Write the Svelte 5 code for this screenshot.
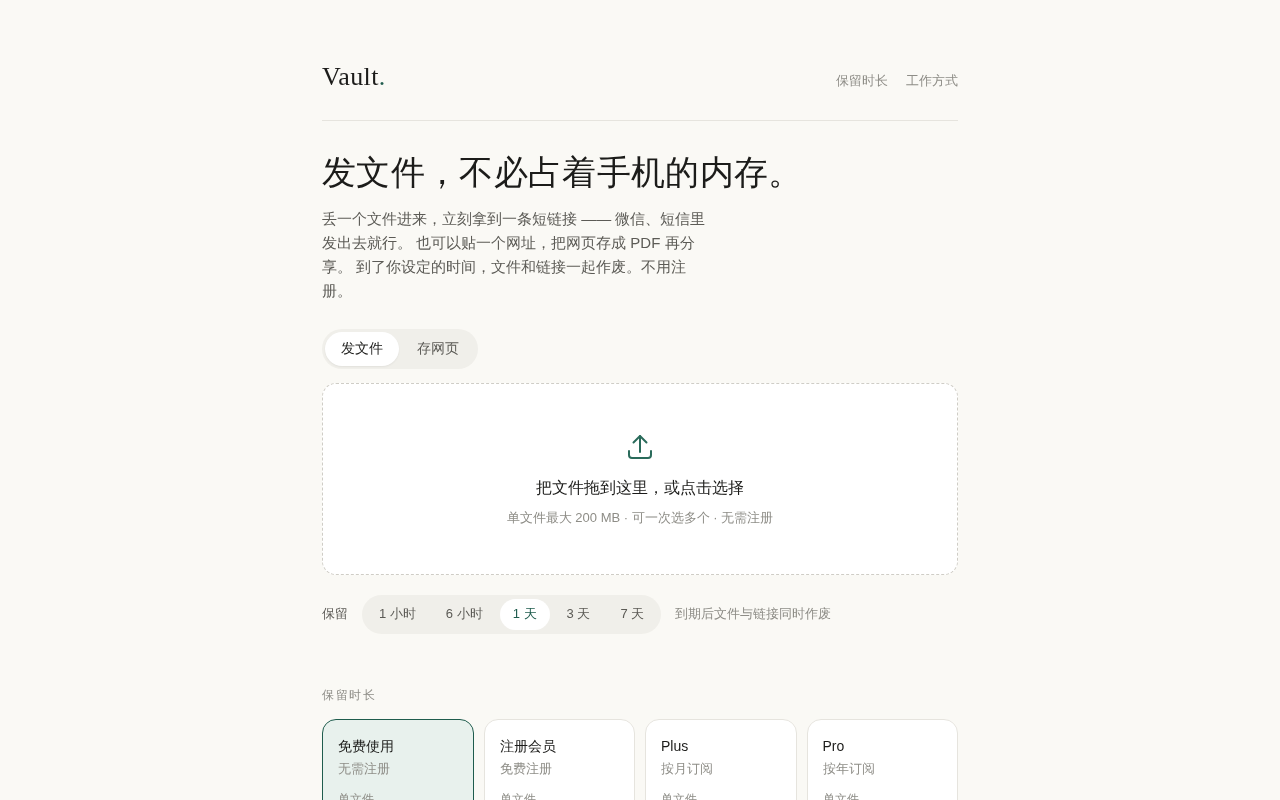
<script>
  let mode = $state('file');
  let retention = $state('1 天');

  const retentionOptions = ['1 小时', '6 小时', '1 天', '3 天', '7 天'];

  const plans = [
    { name: '免费使用', sub: '无需注册', size: '单文件', limit: '200 MB', active: true },
    { name: '注册会员', sub: '免费注册', size: '单文件', limit: '1 GB', active: false },
    { name: 'Plus', sub: '按月订阅', size: '单文件', limit: '5 GB', active: false },
    { name: 'Pro', sub: '按年订阅', size: '单文件', limit: '20 GB', active: false }
  ];
</script>

<div class="page">
  <header class="top">
    <div class="logo">Vault<span class="dot">.</span></div>
    <nav class="links">
      <a href="#plans">保留时长</a>
      <a href="#how">工作方式</a>
    </nav>
  </header>

  <section class="hero">
    <h1>发文件，不必占着手机的内存。</h1>
    <p>丢一个文件进来，立刻拿到一条短链接 —— 微信、短信里发出去就行。 也可以贴一个网址，把网页存成 PDF 再分享。 到了你设定的时间，文件和链接一起作废。不用注册。</p>
  </section>

  <div class="tabs">
    <button class:on={mode === 'file'} onclick={() => (mode = 'file')}>发文件</button>
    <button class:on={mode === 'page'} onclick={() => (mode = 'page')}>存网页</button>
  </div>

  <div class="drop">
    <svg width="28" height="28" viewBox="0 0 28 28" fill="none" stroke="#2a6b5b" stroke-width="2" stroke-linecap="round" stroke-linejoin="round">
      <path d="M14 19V3" />
      <path d="M7.5 9.5L14 3l6.5 6.5" />
      <path d="M3 18v4a3 3 0 0 0 3 3h16a3 3 0 0 0 3-3v-4" />
    </svg>
    <div class="drop-title">把文件拖到这里，或点击选择</div>
    <div class="drop-hint">单文件最大 200 MB · 可一次选多个 · 无需注册</div>
  </div>

  <div class="retain">
    <span class="retain-label">保留</span>
    <div class="pills">
      {#each retentionOptions as opt}
        <button class:on={retention === opt} onclick={() => (retention = opt)}>{opt}</button>
      {/each}
    </div>
    <span class="retain-note">到期后文件与链接同时作废</span>
  </div>

  <section class="plans" id="plans">
    <h2>保留时长</h2>
    <div class="plan-grid">
      {#each plans as plan}
        <div class="plan" class:active={plan.active}>
          <div class="plan-name">{plan.name}</div>
          <div class="plan-sub">{plan.sub}</div>
          <div class="plan-row">{plan.size}</div>
          <div class="plan-limit">{plan.limit}</div>
        </div>
      {/each}
    </div>
  </section>
</div>

<style>
  :global(body) {
    background: #faf9f5;
    color: #1c1c1a;
    font-family: "Liberation Sans", sans-serif;
  }

  .page {
    width: 636px;
    margin: 0 auto;
    padding: 60px 0 48px;
    will-change: transform;
  }

  .top {
    display: flex;
    justify-content: space-between;
    align-items: center;
    height: 60px;
    border-bottom: 1px solid #e6e4de;
  }

  .logo {
    margin-top: -26px;
    font-family: "Liberation Serif", serif;
    font-size: 26px;
    line-height: 32px;
    letter-spacing: 0.015em;
  }

  .dot {
    color: #1f5c4d;
  }

  .links {
    display: flex;
    gap: 18px;
    margin-top: -18px;
    font-size: 13px;
    line-height: 16px;
  }

  .links a {
    color: #8e8d87;
    text-decoration: none;
  }

  .hero {
    padding-top: 29px;
  }

  h1 {
    margin: 0;
    font-family: "Liberation Serif", serif;
    font-size: 34px;
    line-height: 46px;
    font-weight: 400;
    letter-spacing: 0.34px;
  }

  .hero p {
    margin: 11px 0 0;
    max-width: 390px;
    color: #5c5b56;
    font-size: 15px;
    line-height: 24px;
  }

  .tabs {
    display: inline-flex;
    gap: 2px;
    margin-top: 26px;
    padding: 3px;
    border-radius: 999px;
    background: #f0efea;
    vertical-align: top;
  }

  .tabs button {
    padding: 0 16px;
    height: 34px;
    border: 0;
    border-radius: 999px;
    background: transparent;
    color: #5c5b56;
    font: 14px "Liberation Sans", sans-serif;
    cursor: pointer;
  }

  .tabs button.on {
    background: #fff;
    color: #1c1c1a;
    box-shadow: 0 1px 2px rgba(0, 0, 0, 0.06);
  }

  .drop {
    display: flex;
    flex-direction: column;
    align-items: center;
    box-sizing: border-box;
    height: 192px;
    margin-top: 14px;
    padding-top: 49px;
    background: #fff;
    border: 1px dashed #cfcdc6;
    border-radius: 14px;
  }

  .drop-title {
    margin-top: 15px;
    font-size: 16px;
    line-height: 24px;
  }

  .drop-hint {
    margin-top: 8px;
    color: #8e8d87;
    font-size: 13px;
    line-height: 20px;
  }

  .retain {
    display: flex;
    align-items: center;
    gap: 14px;
    margin-top: 20px;
    font-size: 13px;
  }

  .retain-label {
    padding-bottom: 2px;
    color: #5c5b56;
  }

  .retain-note {
    padding-bottom: 2px;
    color: #8e8d87;
  }

  .pills {
    display: flex;
    gap: 4px;
    padding: 4px;
    border-radius: 999px;
    background: #f0efea;
  }

  .pills button {
    padding: 0 13px 2px;
    height: 31px;
    border: 0;
    border-radius: 999px;
    background: transparent;
    color: #5c5b56;
    font: 13px "Liberation Sans", sans-serif;
    cursor: pointer;
  }

  .pills button.on {
    background: #fff;
    color: #1f5c4d;
  }

  .plans {
    margin-top: 52px;
  }

  h2 {
    margin: 0;
    color: #8e8d87;
    font-size: 12px;
    line-height: 18px;
    font-weight: 400;
    letter-spacing: 0.14em;
  }

  .plan-grid {
    display: grid;
    grid-template-columns: repeat(4, 1fr);
    gap: 10px;
    margin-top: 15px;
  }

  .plan {
    padding: 16px 15px;
    background: #fff;
    border: 1px solid #e6e4de;
    border-radius: 14px;
  }

  .plan.active {
    background: #e8f1ed;
    border-color: #1f5c4d;
  }

  .plan-name {
    font-size: 14px;
    line-height: 20px;
  }

  .plan-sub {
    margin-top: 3px;
    color: #8e8d87;
    font-size: 13px;
    line-height: 20px;
  }

  .plan-row {
    margin-top: 11px;
    color: #8e8d87;
    font-size: 12px;
    line-height: 18px;
  }

  .plan-limit {
    font-size: 14px;
    line-height: 20px;
  }
</style>
